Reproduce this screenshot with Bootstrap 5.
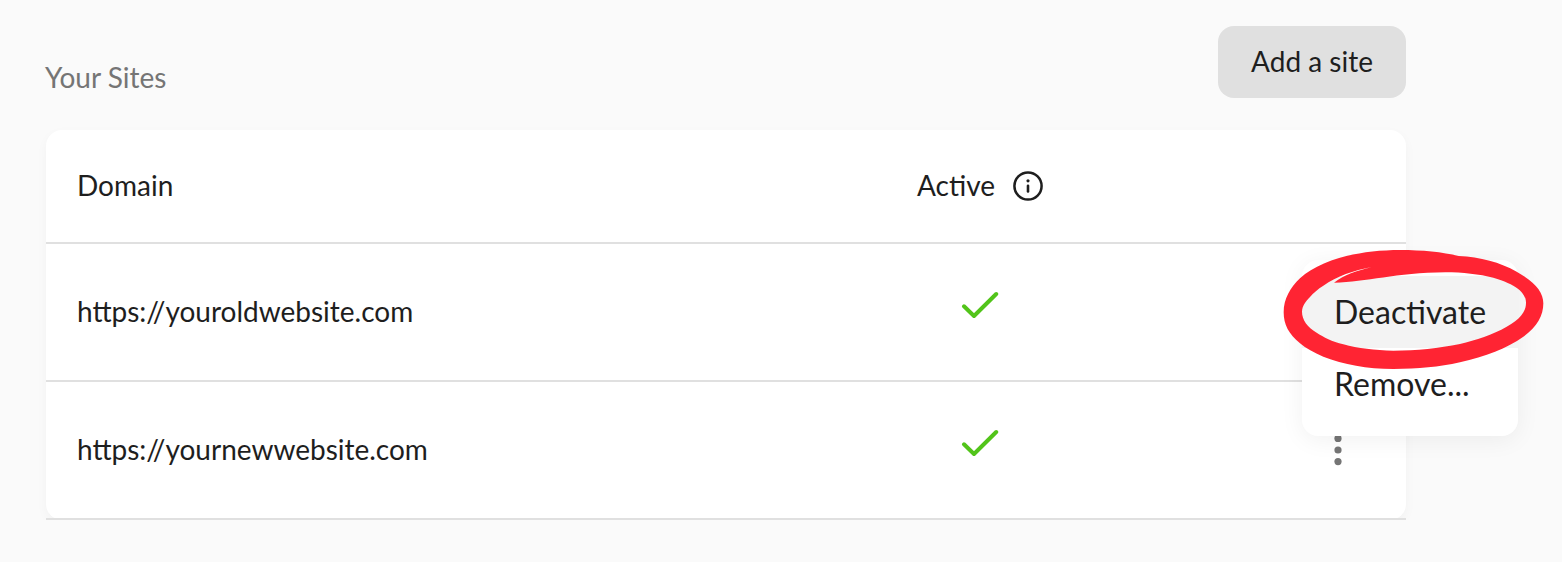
<!DOCTYPE html>
<html lang="en">
<head>
<meta charset="utf-8">
<meta name="viewport" content="width=device-width, initial-scale=1">
<title>Your Sites</title>
<link href="https://cdn.jsdelivr.net/npm/bootstrap@5.3.0/dist/css/bootstrap.min.css" rel="stylesheet">
<style>
  body { background: #fafafa; color: #1e1e1e; font-family: Lato, sans-serif; font-size: 28px; line-height: 36px; overflow: hidden; }
  .sites { width: 1360px; margin-left: 46px; padding-top: 26px; }
  .sites-title { font-size: 28px; line-height: 36px; color: #757575; margin: 33px 0 0 -1px; font-weight: 400; }
  .btn-add { width: 188px; height: 72px; border: 0; border-radius: 16px; background: #e0e0e0; color: #1e1e1e; font-size: 28px; line-height: 36px; padding: 0 0 2px; }
  .btn-add:hover { background: #d6d6d6; }
  .sites-panel { margin-top: 32px; height: 390px; border-radius: 16px; background: #fff; box-shadow: 0 4px 12px rgba(0,0,0,.035); }
  .site-row { height: 138px; border-bottom: 2px solid #e0e0e0; padding-left: 31px; }
  .site-head { height: 114px; }
  .domain-cell { width: 840px; flex-shrink: 0; padding-bottom: 2px; }
  .active-cell { width: 126px; flex-shrink: 0; }
  .active-label { padding-bottom: 2px; }
  .menu-cell { margin-left: 226px; width: 137px; flex-shrink: 0; padding-left: 1px; }
  .tick { margin-top: -14px; }
  .site-menu { display: block; left: 1256px; top: 130px; width: 216px; height: 176px; padding: 16px 0; border: 0; border-radius: 16px; background: #fff; box-shadow: 0 4px 24px rgba(0,0,0,.06); font-size: 32px; --bs-dropdown-font-size: 32px; }
  .site-menu .dropdown-item { height: 72px; padding: 0 32px; line-height: 72px; color: #1e1e1e; }
  .site-menu .dropdown-item.current { background: #f3f3f3; }
  .ring { left: 1226px; top: 105px; z-index: 1100; pointer-events: none; }
</style>
</head>
<body>
<main class="sites">
  <div class="d-flex justify-content-between align-items-start">
    <h1 class="sites-title">Your Sites</h1>
    <button class="btn btn-add" type="button">Add a site</button>
  </div>
  <section class="sites-panel position-relative">
    <div class="site-row site-head d-flex align-items-center">
      <div class="domain-cell">Domain</div>
      <div class="active-cell d-flex align-items-center justify-content-between">
        <span class="active-label">Active</span>
        <svg width="30" height="30" viewBox="0 0 30 30" fill="none" stroke="#1e1e1e" aria-hidden="true">
          <circle cx="15" cy="15" r="13.6" stroke-width="2.5"/>
          <path d="M15 14.7v5.8" stroke-width="2.6" stroke-linecap="round"/>
          <circle cx="15" cy="9.8" r="1.6" fill="#1e1e1e" stroke="none"/>
        </svg>
      </div>
    </div>
    <div class="site-row d-flex align-items-center">
      <div class="domain-cell">https://youroldwebsite.com</div>
      <div class="active-cell d-flex justify-content-center">
        <svg class="tick" width="38" height="28" viewBox="0 0 38 28" fill="none" stroke="#52c41a" stroke-width="4" stroke-linecap="round" stroke-linejoin="round"><path d="M3 15.3 13 25 35.2 3"/></svg>
      </div>
    </div>
    <div class="site-row d-flex align-items-center">
      <div class="domain-cell">https://yournewwebsite.com</div>
      <div class="active-cell d-flex justify-content-center">
        <svg class="tick" width="38" height="28" viewBox="0 0 38 28" fill="none" stroke="#52c41a" stroke-width="4" stroke-linecap="round" stroke-linejoin="round"><path d="M3 15.3 13 25 35.2 3"/></svg>
      </div>
      <div class="menu-cell d-flex justify-content-center">
        <svg width="8" height="32" viewBox="0 0 8 32" fill="#757575"><circle cx="4" cy="4.4" r="3.6"/><circle cx="4" cy="16" r="3.6"/><circle cx="4" cy="27.6" r="3.6"/></svg>
      </div>
    </div>
    <div class="dropdown-menu site-menu">
      <a class="dropdown-item current" href="#">Deactivate</a>
      <a class="dropdown-item" href="#">Remove...</a>
    </div>
    <!-- Hand-drawn highlight around Deactivate -->
    <svg class="ring position-absolute" width="290" height="240" viewBox="0 0 870 720" aria-hidden="true">
      <path fill="#ff2433" fill-rule="evenodd" d="M35 232C35 192 55 157 84 130C145 74 260 45 385 45C450 45 512 51 560 63C625 66 684 82 734 110C788 141 814 170 814 205C814 242 795 277 754 305C705 340 640 364 564 382C500 396 440 402 364 402C285 401 215 389 154 365C125 353 102 340 84 325C50 297 35 269 35 232ZM90 230C91 212 100 201 114 186C124 174 138 162 154 152C195 124 245 106 299 96C255 107 215 120 186 143C285 142 370 113 520 112C572 112 622 118 664 128C730 147 762 172 762 203C762 231 743 253 704 275C662 299 612 315 564 327C500 340 435 347 364 347C308 346 258 340 214 328C180 319 155 307 134 293C106 276 90 254 90 230Z"/>
    </svg>
  </section>
</main>
<script src="https://cdn.jsdelivr.net/npm/bootstrap@5.3.0/dist/js/bootstrap.bundle.min.js"></script>
</body>
</html>
